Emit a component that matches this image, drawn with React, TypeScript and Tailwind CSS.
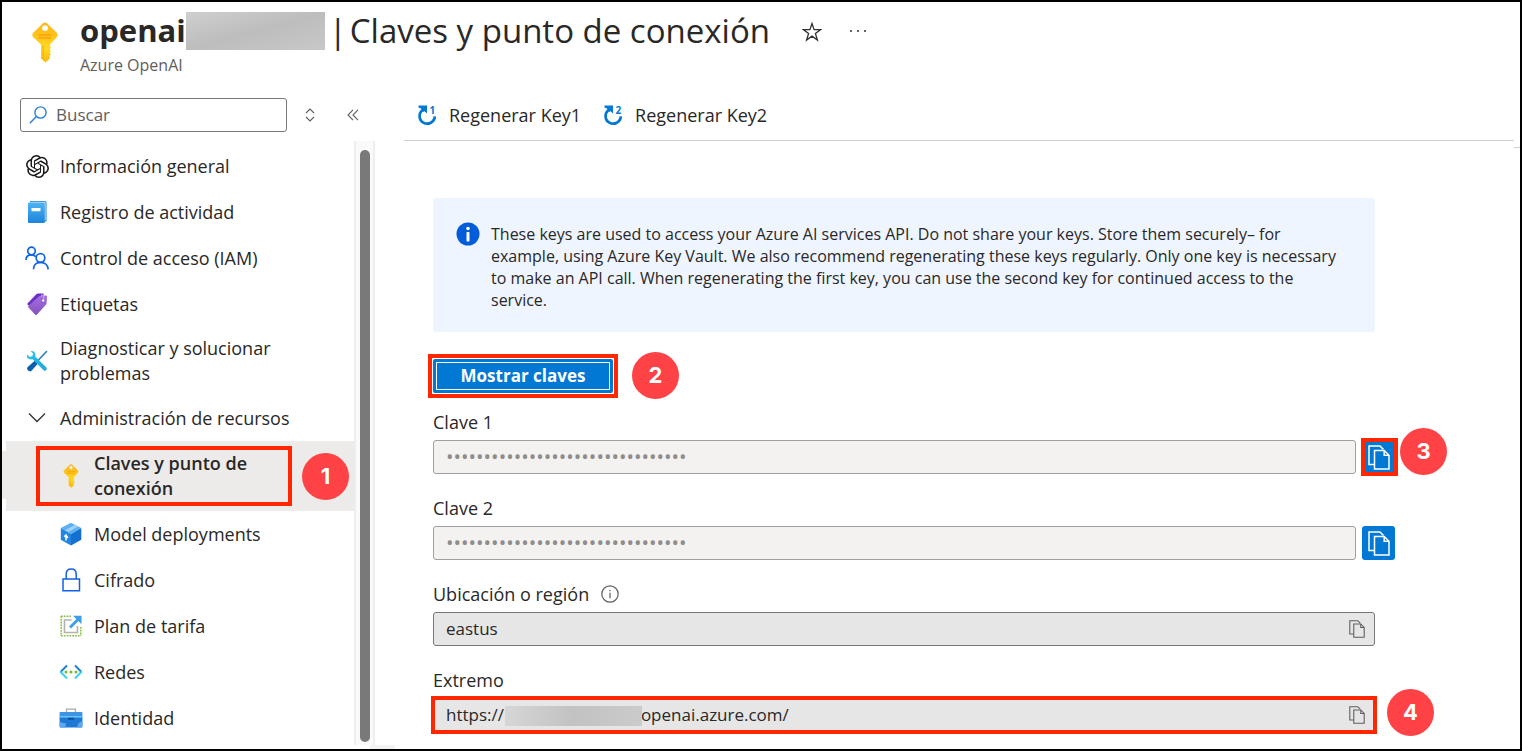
import type { ReactNode } from "react";
import { SiOpenai } from "react-icons/si";

function KeyIcon({ className, id }: { className: string; id: string }) {
  return (
    <svg viewBox="0 0 26 41" className={className} aria-hidden="true">
      <defs>
        <linearGradient id={id} x1="0" y1="0" x2="0" y2="1">
          <stop offset="0" stopColor="#ffb61a" />
          <stop offset="0.3" stopColor="#ffc21a" />
          <stop offset="0.65" stopColor="#ffd91f" />
          <stop offset="1" stopColor="#fcb813" />
        </linearGradient>
      </defs>
      <path
        fill={`url(#${id})`}
        fillRule="evenodd"
        d="M11 1.2Q13 -.4 15 1.2L25 11Q26.400 13 25 15L18 22.500V24.500L19 25.700L17.500 27.200L19 29L17.500 30.600L19 32L17.800 33.600L18 36.600L13.500 40.600L9 36.600V22.500L1 15Q-.4 13 1 11ZM13 3.200A2.900 2.900 0 1 0 13 9A2.900 2.900 0 1 0 13 3.200Z"
      />
      <path d="M7 13H19M7 16H19" stroke="#ff9f0f" strokeWidth="1.300" strokeLinecap="round" />
      <path d="M11.200 24V37" stroke="#fba60e" strokeWidth="1" />
    </svg>
  );
}

function BookIcon() {
  return (
    <svg viewBox="0 0 20 22" className="h-[22px] w-5" aria-hidden="true">
      <defs>
        <linearGradient id="book" x1="0" y1="0" x2="0" y2="1">
          <stop offset="0" stopColor="#4fb3f3" />
          <stop offset="1" stopColor="#1c84dc" />
        </linearGradient>
      </defs>
      <path d="M3 0H18Q19.500 0 19.500 1.500V20L16 22H3Z" fill="#1f7fce" />
      <path d="M3.500 .8H18L18.600 1.200V19.500L16.500 20V3H2Z" fill="#d7ecfb" />
      <rect x="1" y="1.500" width="16.800" height="20.500" rx="1" fill="url(#book)" />
      <rect x="4.500" y="7" width="9" height="3.200" rx=".4" fill="#fff" />
    </svg>
  );
}

function PeopleIcon() {
  return (
    <svg viewBox="0 0 24 24" className="size-6" fill="none" stroke="#0f62e6" strokeWidth="1.700" aria-hidden="true">
      <circle cx="6.500" cy="5" r="3.800" />
      <path d="M1 14C1 10.500 3.200 8.900 6.500 8.900C8.500 8.900 9.900 9.600 10.800 10.800" />
      <circle cx="15.500" cy="12" r="4.300" />
      <path d="M8.500 23.300C8.500 18.800 11.500 16.400 15.500 16.400C19.500 16.400 22.800 18.800 23.200 23.300" />
    </svg>
  );
}

function TagIcon() {
  return (
    <svg viewBox="0 0 22 24" className="h-6 w-[22px]" aria-hidden="true">
      <defs>
        <linearGradient id="tag" x1="0" y1="0" x2="0" y2="1">
          <stop offset="0" stopColor="#a56fe0" />
          <stop offset="1" stopColor="#8450bd" />
        </linearGradient>
      </defs>
      <path d="M1 12L10.500 2Q11 1.500 12 1.500L17.500 1.500L18 5L5 15.500Z" fill="#6b2fc9" />
      <path d="M2.500 14L13 4.200L20 3.500Q21 3.500 21 4.500L20.500 12L11 22.500Q10 23.500 9 22.500L2.500 15.500Q1.800 14.700 2.500 14Z" fill="url(#tag)" />
      <circle cx="17.200" cy="8.500" r="1.700" fill="#fff" stroke="#6b2fc9" strokeWidth=".7" />
      <path d="M15 4.500Q15.500 1.500 17.500 3.500L17.800 7.500" fill="none" stroke="#cdb2f3" strokeWidth="1" />
    </svg>
  );
}

function ToolsIcon() {
  return (
    <svg viewBox="0 0 22 22" className="size-[22px]" aria-hidden="true">
      <defs>
        <linearGradient id="tools" x1="0" y1="0" x2="1" y2="1">
          <stop offset="0" stopColor="#2cc4ec" />
          <stop offset="1" stopColor="#1aa8dc" />
        </linearGradient>
      </defs>
      <path d="M20.500 1.500L12 10.500" stroke="#2a7cbf" strokeWidth="1.600" strokeLinecap="round" />
      <path d="M9 10.500L12 13.500L5.500 20.700Q4 22 2.500 20.700L1.400 19.600Q.5 18.200 1.700 17Z" fill="#0b5fad" />
      <path
        d="M4.700 1.200Q8.500 .5 9.300 4.200L9.200 6.500L20.400 17.600Q21.300 19 20.200 20.200Q18.900 21.200 17.600 20.300L6.600 9.300Q3.300 9.900 1.600 8Q.4 6.200 1 4.600L3.800 7L6.300 6.300L7.200 3.800Z"
        fill="url(#tools)"
      />
    </svg>
  );
}

function CubeIcon() {
  return (
    <svg viewBox="0 0 22 24" className="h-6 w-[22px]" aria-hidden="true">
      <path d="M11 .8L21.300 6L11 12L.8 6Z" fill="#5db0f2" />
      <path d="M15 2.800L18 4.400L8 10.200L4.800 8.400Z" fill="#9fd0f8" />
      <path d="M.8 6L11 12V23.500L.8 17.800Z" fill="#2286e0" />
      <path d="M21.300 6L11 12V23.500L21.300 17.800Z" fill="#1470d0" />
      <path d="M6 18.500V13.800M4.200 14.800L6 13L7.800 16" stroke="#fff" strokeWidth="1.500" fill="none" />
    </svg>
  );
}

function LockIcon() {
  return (
    <svg viewBox="0 0 20 24" className="h-6 w-5" fill="none" stroke="#1560e4" strokeWidth="1.500" aria-hidden="true">
      <path d="M2 11H18.500V22.700H2Z" />
      <path d="M5.200 11V6Q5.200 1 10.200 1Q15.200 1 15.200 6V11" />
    </svg>
  );
}

function ScaleIcon() {
  return (
    <svg viewBox="0 0 22 22" className="size-[22px]" fill="none" aria-hidden="true">
      <path d="M1.200 1V21M1 20.800H21M20.800 12V21M1 1.200H11" stroke="#86c440" strokeWidth="1.600" strokeDasharray="1.800 1" />
      <path d="M11.500 5H4.500V17.500H17.500V11" stroke="#b3b3b3" strokeWidth="1.600" />
      <path d="M10 12.500L18 4.500" stroke="#3d9ee8" strokeWidth="2.800" />
      <path d="M13 .8H21.500V9.300Z" fill="#3d9ee8" />
    </svg>
  );
}

function NetworkIcon() {
  return (
    <svg viewBox="0 0 24 16" className="h-4 w-6" fill="none" aria-hidden="true">
      <path d="M8 1.500L1.500 8M16 1.500L22.500 8" stroke="#1d80d8" strokeWidth="2" />
      <path d="M1.200 7.500L8 14.500M22.800 7.500L16 14.500" stroke="#3ed0f2" strokeWidth="2" />
      <circle cx="7" cy="8" r="1.500" fill="#76bc2d" />
      <circle cx="12" cy="8" r="1.500" fill="#76bc2d" />
      <circle cx="17" cy="8" r="1.500" fill="#76bc2d" />
    </svg>
  );
}

function ToolboxIcon() {
  return (
    <svg viewBox="0 0 24 20" className="h-5 w-6" aria-hidden="true">
      <path d="M7.500 4.500V1.200H16.500V4.500" fill="none" stroke="#a9a9a9" strokeWidth="1.300" />
      <rect x=".6" y="4" width="22.800" height="7" rx=".8" fill="#3f94e6" />
      <path d="M.6 9.500H23.400V18.500Q23.400 19.500 22.400 19.500H1.600Q.6 19.500 .6 18.500Z" fill="#1f78d4" />
      <path d="M.6 14L7 15.500L6.500 19.500H1.600Q.6 19.500 .6 18.500ZM23.400 13Q18 14.500 18.500 19.500H22.400Q23.400 19.500 23.400 18.500Z" fill="#5ea6f0" />
      <path d="M.6 8.800H23.400" stroke="#6fd3fb" strokeWidth="1.200" />
      <rect x="9" y="9.800" width="6" height="2" fill="#0b4f9c" />
    </svg>
  );
}

function RegenerateIcon({ digit }: { digit: string }) {
  return (
    <svg viewBox="0 0 20 20" className="size-5 overflow-visible" aria-hidden="true">
      <path d="M6.200 4.600A7.600 7.600 0 1 0 17.800 11.400" fill="none" stroke="#0078d4" strokeWidth="2.700" />
      <path d="M1.500 .6H10V8.600L7.600 6.200L5.800 7L4 3.400L1.500 2.400Z" fill="#0078d4" />
      <text x="12.500" y="8.600" fontSize="10" fontWeight="700" fill="#0078d4" fontFamily="Open Sans, sans-serif">
        {digit}
      </text>
    </svg>
  );
}

function CopyIcon({ className }: { className: string }) {
  return (
    <svg viewBox="0 0 22 25" className={className} fill="none" stroke="currentColor" strokeWidth="1.500" aria-hidden="true">
      <path d="M6 19.500H1V1H12L15.500 4.500" />
      <path d="M6.500 5.500H16.200L21 10.300V24H6.500Z" />
      <path d="M16.200 5.500V10.300H21" />
    </svg>
  );
}

function Badge({ n, className = "" }: { n: number; className?: string }) {
  return (
    <span
      className={`flex size-[47px] shrink-0 items-center justify-center rounded-full bg-[#ff4245] font-['Inter',sans-serif] text-[22px] font-bold text-white ${className}`}
    >
      {n}
    </span>
  );
}

function NavItem({ icon, label }: { icon: ReactNode; label: string }) {
  return (
    <a href="#" className="flex min-h-[46px] items-center gap-[11px] py-[9px] pr-16 pl-[23px]">
      <span className="flex w-6 shrink-0 justify-center">{icon}</span>
      <span>{label}</span>
    </a>
  );
}

function SubItem({ icon, label }: { icon: ReactNode; label: string }) {
  return (
    <a href="#" className="flex h-[46px] items-center gap-[11px] pl-[57px]">
      <span className="flex w-6 shrink-0 justify-center">{icon}</span>
      <span>{label}</span>
    </a>
  );
}

function Sidebar() {
  return (
    <aside className="flex w-[373px] shrink-0 flex-col">
      <div className="flex items-center pt-[13px] pl-[18px]">
        <label className="flex h-[34px] w-[267px] items-center gap-[9px] rounded-[3px] border border-[#7a7876] px-2">
          <svg viewBox="0 0 18 18" className="size-[18px] shrink-0" fill="none" stroke="#2a7fd6" strokeWidth="1.400" aria-hidden="true">
            <circle cx="11.500" cy="6.500" r="5.600" />
            <path d="M7.400 10.600L.8 17.200" />
          </svg>
          <input
            type="search"
            aria-label="Buscar"
            placeholder="Buscar"
            className="w-full min-w-0 bg-transparent text-[17px] leading-6 outline-none placeholder:text-[#605e5c]"
          />
        </label>
        <button type="button" aria-label="Ordenar" className="ml-[18px]">
          <svg viewBox="0 0 10 14" className="h-[14px] w-[10px]" fill="none" stroke="#605e5c" strokeWidth="1.100" aria-hidden="true">
            <path d="M1 5L5 1L9 5M1 9L5 13L9 9" />
          </svg>
        </button>
        <button type="button" aria-label="Contraer menú" className="ml-8">
          <svg viewBox="0 0 12 12" className="size-3" fill="none" stroke="#605e5c" strokeWidth="1.100" aria-hidden="true">
            <path d="M6 .8L1 6L6 11.200M11 .8L6 6L11 11.200" />
          </svg>
        </button>
      </div>
      <div className="relative mt-[9px] flex grow">
        <nav aria-label="Menú de recursos" className="grow pt-0.5 text-lg leading-[25px]">
          <NavItem icon={<SiOpenai className="size-[23px] text-[#1b1a19]" />} label="Información general" />
          <NavItem icon={<BookIcon />} label="Registro de actividad" />
          <NavItem icon={<PeopleIcon />} label="Control de acceso (IAM)" />
          <NavItem icon={<TagIcon />} label="Etiquetas" />
          <NavItem icon={<ToolsIcon />} label="Diagnosticar y solucionar problemas" />
          <button type="button" aria-expanded="true" className="flex h-[46px] items-center gap-[11px] pl-[23px]">
            <svg viewBox="0 0 24 12" className="h-3 w-6" fill="none" stroke="#323130" strokeWidth="1.300" aria-hidden="true">
              <path d="M4 1.500L12 9.500L20 1.500" />
            </svg>
            <span>Administración de recursos</span>
          </button>
          <div className="relative ml-1 flex h-[70px] items-center bg-[#edebe9]">
            <span className="absolute top-[10px] -left-1 h-12 w-1 bg-[#edebe9]" />
            <a href="#" aria-current="page" className="flex w-[285px] items-center gap-[11px] pl-[53px] font-semibold">
              <span className="flex w-6 shrink-0 justify-center">
                <KeyIcon id="key-nav" className="h-6 w-4" />
              </span>
              <span className="w-40">Claves y punto de conexión</span>
            </a>
            <span className="pointer-events-none absolute top-[5px] left-[30px] h-[60px] w-[256px] border-4 border-[#ff2600]" />
            <Badge n={1} className="ml-[11px]" />
          </div>
          <SubItem icon={<CubeIcon />} label="Model deployments" />
          <SubItem icon={<LockIcon />} label="Cifrado" />
          <SubItem icon={<ScaleIcon />} label="Plan de tarifa" />
          <SubItem icon={<NetworkIcon />} label="Redes" />
          <SubItem icon={<ToolboxIcon />} label="Identidad" />
        </nav>
        <div className="mb-1 flex w-[21px] shrink-0 justify-center border-x-2 border-[#eeeeee] bg-[#fafafa] pt-[9px] pb-[3px]">
          <div className="w-[10px] rounded-full bg-[#797979]" />
        </div>
        <div className="absolute -right-5 bottom-0 h-1 w-[25px] bg-[#f3f3f3]" />
      </div>
    </aside>
  );
}

const KEY_VALUE = "00000000000000000000000000000000";

function KeyField({ id, label, children }: { id: string; label: string; children?: ReactNode }) {
  return (
    <div className="-mr-5">
      <label htmlFor={id} className="block h-[30px] text-lg leading-6">
        {label}
      </label>
      <div className="relative flex items-center gap-[6px]">
        <input
          id={id}
          type="password"
          disabled
          value={KEY_VALUE}
          className="h-[34px] min-w-0 grow rounded-[3px] border border-[#a19f9d] bg-[#f3f2f1] px-3 pb-0.5 text-xl text-[#8f8d8b]"
        />
        <button
          type="button"
          aria-label={`Copiar ${label}`}
          className="flex h-[34px] w-[33px] items-center justify-center rounded-[3px] bg-[#0078d4] text-white"
        >
          <CopyIcon className="h-[25px] w-[22px]" />
        </button>
        {children}
      </div>
    </div>
  );
}

function ReadOnlyField({ id, value, children }: { id: string; value: string; children?: ReactNode }) {
  return (
    <div className="relative flex h-[34px] items-center rounded-[3px] border border-[#7a7876] bg-[#e6e6e6] pr-[9px] pl-3">
      <input id={id} readOnly value={value} className="min-w-0 grow bg-transparent text-[17px] leading-6 outline-none" />
      <button type="button" aria-label="Copiar al portapapeles" className="text-[#605e5c]">
        <CopyIcon className="h-[18px] w-4" />
      </button>
      {children}
    </div>
  );
}

export default function App() {
  return (
    <div className="flex min-h-screen flex-col border-2 border-black bg-white font-['Open_Sans','Noto_Sans',sans-serif] text-[#292827]">
      <header className="flex h-[83px] items-start pl-[30px]">
        <KeyIcon id="key-title" className="mt-5 h-[41px] w-[26px]" />
        <div className="ml-[22px]">
          <h1 className="flex h-[51px] items-center pt-[7px] leading-[44px] whitespace-nowrap">
            <span className="pb-[3px] text-[31px] font-bold">openai</span>
            <span className="h-[38px] w-[139px] bg-linear-to-br from-[#cfcfcf] via-[#bdbdbd] to-[#c8c8c8]" />
            <span className="flex gap-[3px] pb-px pl-1 text-[33px]">
              <span>|</span>
              <span>Claves y punto de conexión</span>
            </span>
          </h1>
          <p className="text-base leading-6 text-[#605e5c]">Azure OpenAI</p>
        </div>
        <button type="button" aria-label="Agregar a favoritos" className="mt-5 ml-8">
          <svg viewBox="0 0 20 20" className="size-5" fill="none" stroke="#323130" strokeWidth="1.300" aria-hidden="true">
            <path d="M10 1.500L12.100 7.600H18.700L13.400 11.500L15.400 18L10 14.100L4.600 18L6.600 11.500L1.300 7.600H7.900Z" />
          </svg>
        </button>
        <button type="button" aria-label="Más" className="mt-[27px] ml-[27px]">
          <svg viewBox="0 0 18 4" className="h-1 w-[18px]" fill="#323130" aria-hidden="true">
            <circle cx="2" cy="2" r="1" />
            <circle cx="9" cy="2" r="1" />
            <circle cx="16" cy="2" r="1" />
          </svg>
        </button>
      </header>

      <div className="flex grow">
        <Sidebar />
        <main className="min-w-0 grow pl-[29px]">
          <div className="relative mr-[6px] flex h-14 items-center gap-[22px] border-b border-[#d2d0ce] pt-1 pl-[13px] text-lg leading-6">
            <button type="button" className="flex items-center gap-3">
              <RegenerateIcon digit="1" />
              Regenerar Key1
            </button>
            <button type="button" className="flex items-center gap-3">
              <RegenerateIcon digit="2" />
              Regenerar Key2
            </button>
            <span className="absolute -right-[6px] -bottom-2 h-px w-[6px] bg-[#d2d0ce]" />
          </div>

          <div className="mr-[145px] pl-[29px]">
            <div className="mt-[57px] flex h-[134px] items-start gap-[11px] rounded-[3px] bg-[#eff5ff] pt-6 pl-[23px]">
              <svg viewBox="0 0 24 24" className="size-6 shrink-0" aria-hidden="true">
                <circle cx="12" cy="12" r="11.500" fill="#015cda" />
                <circle cx="12" cy="6.500" r="1.800" fill="#fff" />
                <rect x="10.500" y="10" width="3" height="9.500" rx=".8" fill="#fff" />
              </svg>
              <p className="max-w-[857px] pt-px text-base leading-[22px]">
                These keys are used to access your Azure AI services API. Do not share your keys. Store them securely– for
                example, using Azure Key Vault. We also recommend regenerating these keys regularly. Only one key is necessary
                to make an API call. When regenerating the first key, you can use the second key for continued access to the
                service.
              </p>
            </div>

            <div className="mt-5 -ml-[5px] flex items-center gap-[14px]">
              <div className="border-4 border-[#ff2600] p-px">
                <button type="button" className="h-[34px] w-[180px] rounded-[2px] bg-[#0078d4] p-[3px] text-[17px] leading-6 font-bold text-white">
                  <span className="flex h-full items-center justify-center border border-white">Mostrar claves</span>
                </button>
              </div>
              <Badge n={2} />
            </div>

            <div className="mt-[11px] flex flex-col gap-[22px]">
              <KeyField id="key1" label="Clave 1">
                <span className="pointer-events-none absolute -top-0.5 -right-[3px] h-[38px] w-[37px] border-4 border-[#ff2600]" />
                <Badge n={3} className="absolute -top-3 -right-[52px]" />
              </KeyField>
              <KeyField id="key2" label="Clave 2" />
              <div>
                <div className="flex h-[30px] items-start gap-3 text-lg leading-6">
                  <label htmlFor="region">Ubicación o región</label>
                  <svg viewBox="0 0 18 18" className="mt-[3px] size-[18px]" fill="none" stroke="#605e5c" strokeWidth="1.200" aria-hidden="true">
                    <circle cx="9" cy="9" r="8.200" />
                    <path d="M9 7.800V13.200M9 5V6.200" />
                  </svg>
                </div>
                <ReadOnlyField id="region" value="eastus" />
              </div>
              <div>
                <label htmlFor="endpoint" className="block h-[30px] text-lg leading-6">
                  Extremo
                </label>
                <ReadOnlyField id="endpoint" value={`https://${"\u00a0".repeat(31)}openai.azure.com/`}>
                  <span className="pointer-events-none absolute top-[7px] left-[71px] h-5 w-[137px] bg-linear-to-r from-[#d6d6d6] via-[#c2c2c2] to-[#cbcbcb]" />
                  <span className="pointer-events-none absolute -inset-[3px] border-4 border-[#ff2600]" />
                  <Badge n={4} className="absolute -top-[10px] -right-[60px]" />
                </ReadOnlyField>
              </div>
            </div>
          </div>
        </main>
      </div>
    </div>
  );
}
